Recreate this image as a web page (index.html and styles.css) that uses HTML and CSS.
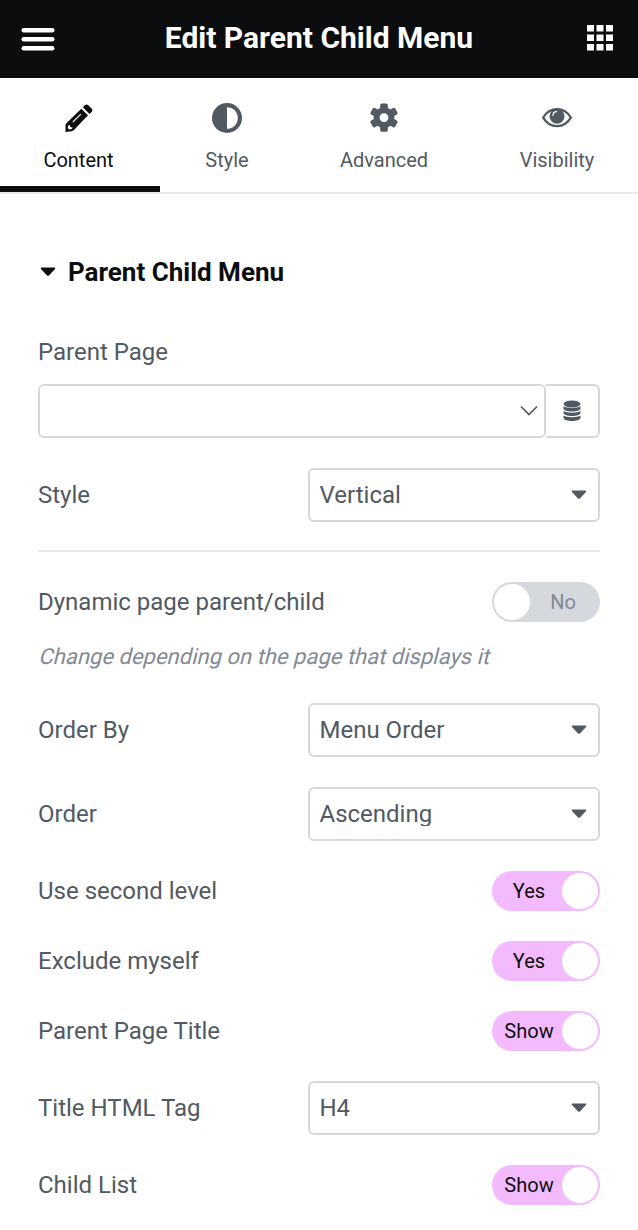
FILE: index.html
```html
<!DOCTYPE html>
<html lang="en">
<head>
<meta charset="utf-8">
<title>Edit Parent Child Menu</title>
<link rel="stylesheet" href="styles.css">
</head>
<body>
<header class="topbar">
  <svg class="burger" width="34" height="24" viewBox="0 0 34 24" fill="#fff"><rect x=".5" y="0" width="33" height="4.600" rx="2.300"/><rect x=".5" y="9" width="33" height="4.600" rx="2.300"/><rect x=".5" y="18" width="33" height="4.600" rx="2.300"/></svg>
  <h1 class="topbar-title">Edit Parent Child Menu</h1>
  <svg class="apps" width="26" height="26" viewBox="0 0 26 26" fill="#fff"><path d="M0 0h7v6.500H0zM9.500 0h7v6.500h-7zM19 0h7v6.500h-7zM0 9.500h7V16H0zM9.500 9.500h7V16h-7zM19 9.500h7V16h-7zM0 19h7v6.500H0zM9.500 19h7v6.500h-7zM19 19h7v6.500h-7z"/></svg>
</header>
<nav class="tabs">
  <a class="tab tab-content active">
    <svg width="30" height="30" viewBox="0 0 30 30"><path fill="currentColor" d="M1.500 29V22.500Q1.500 21.300 2.400 20.300L17.300 5.700 24 12.300 10 27Q9 28 7.800 28.200ZM18.800 4.300l2.100-2.100c1.100-1.100 2.300-1.100 3.400 0l3.300 3.300c1.100 1.100 1.100 2.300 0 3.400l-2.100 2.100Z"/><path fill="none" stroke="#fff" stroke-width="1.100" d="m8.900 19 7.900-7.900"/><path fill="#fff" d="m4.200 22.400 1.500-.7.400 2.300 2.500.4-1 1.700-2.300.4-1.600-1.600Z"/></svg>
    <span>Content</span>
  </a>
  <a class="tab">
    <svg width="30" height="30" viewBox="0 0 30 30"><circle cx="15" cy="15" r="15" fill="currentColor"/><path d="M15 4.200a10.800 10.800 0 0 1 0 21.600z" fill="#fff"/></svg>
    <span>Style</span>
  </a>
  <a class="tab">
    <svg width="30" height="30" viewBox="0 0 30 30"><g fill="currentColor"><circle cx="15" cy="14.600" r="10.400"/><rect x="11.200" y=".4" width="7.600" height="28.400" rx="1.600"/><rect x="11.200" y=".4" width="7.600" height="28.400" rx="1.600" transform="rotate(60 15 14.600)"/><rect x="11.200" y=".4" width="7.600" height="28.400" rx="1.600" transform="rotate(120 15 14.600)"/></g><circle cx="15" cy="14.600" r="4.400" fill="#fff"/></svg>
    <span>Advanced</span>
  </a>
  <a class="tab tab-visibility">
    <svg width="30" height="30" viewBox="0 0 30 30"><path d="M1.200 14.700C4.500 9 9.500 6.200 15 6.200S25.500 9 28.800 14.700c-3.300 5.700-8.300 8.500-13.800 8.500S4.500 20.400 1.200 14.700Z" fill="none" stroke="currentColor" stroke-width="2.300"/><circle cx="15" cy="13.300" r="7.500" fill="currentColor"/><path d="M11 12.400c0-2.100 1.400-3.600 3.700-3.700" fill="none" stroke="#fff" stroke-width="1.200" stroke-linecap="round"/></svg>
    <span>Visibility</span>
  </a>
</nav>
<main class="panel">
  <h2 class="section-title"><svg width="16" height="10" viewBox="0 0 16 10"><path class="caret" d="M1.500.5h13q1.500.2.500 1.500L9.200 8.300q-1.200 1-2.400 0L1 2Q0 .7 1.500.5Z"/></svg>Parent Child Menu</h2>
  <div class="field">
    <label class="label">Parent Page</label>
    <div class="combo">
      <div class="combo-input"><svg width="18" height="12" viewBox="0 0 18 12"><path d="m1 1.500 8 8 8-8" fill="none" stroke="#515962" stroke-width="1.700"/></svg></div>
      <div class="combo-button"><svg width="18" height="22" viewBox="0 0 18 22" fill="#515962"><ellipse cx="9" cy="4" rx="8.500" ry="3.500"/><path d="M.5 6.300c3 2.300 14 2.300 17 0v2.200c0 4-17 4-17 0ZM.5 10.900c3 2.300 14 2.300 17 0v2.200c0 4-17 4-17 0ZM.5 15.500c3 2.300 14 2.300 17 0v2.200c0 4.300-17 4.300-17 0Z"/></svg></div>
    </div>
  </div>
  <div class="row"><span class="label">Style</span><div class="select"><span class="value">Vertical</span><svg width="16" height="10" viewBox="0 0 16 10"><path class="caret" d="M1.500.5h13q1.500.2.500 1.500L9.200 8.300q-1.200 1-2.400 0L1 2Q0 .7 1.500.5Z"/></svg></div></div>
  <hr class="divider">
  <div class="row"><span class="label">Dynamic page parent/child</span><div class="switch off"><i class="knob"></i><span class="state">No</span></div></div>
  <p class="description">Change depending on the page that displays it</p>
  <div class="row"><span class="label">Order By</span><div class="select"><span class="value">Menu Order</span><svg width="16" height="10" viewBox="0 0 16 10"><path class="caret" d="M1.500.5h13q1.500.2.500 1.500L9.200 8.300q-1.200 1-2.400 0L1 2Q0 .7 1.500.5Z"/></svg></div></div>
  <div class="row"><span class="label">Order</span><div class="select"><span class="value">Ascending</span><svg width="16" height="10" viewBox="0 0 16 10"><path class="caret" d="M1.500.5h13q1.500.2.500 1.500L9.200 8.300q-1.200 1-2.400 0L1 2Q0 .7 1.500.5Z"/></svg></div></div>
  <div class="row"><span class="label">Use second level</span><div class="switch"><span class="state">Yes</span><i class="knob"></i></div></div>
  <div class="row"><span class="label">Exclude myself</span><div class="switch"><span class="state">Yes</span><i class="knob"></i></div></div>
  <div class="row"><span class="label">Parent Page Title</span><div class="switch"><span class="state">Show</span><i class="knob"></i></div></div>
  <div class="row"><span class="label">Title HTML Tag</span><div class="select"><span class="value">H4</span><svg width="16" height="10" viewBox="0 0 16 10"><path class="caret" d="M1.500.5h13q1.500.2.500 1.500L9.200 8.300q-1.200 1-2.400 0L1 2Q0 .7 1.500.5Z"/></svg></div></div>
  <div class="row"><span class="label">Child List</span><div class="switch"><span class="state">Show</span><i class="knob"></i></div></div>
</main>
</body>
</html>
```
FILE: styles.css
```css
* { box-sizing: border-box; }
body {
  margin: 0;
  background: #fff;
  color: #515962;
  font-family: Roboto, "Liberation Sans", sans-serif;
  font-size: 24px;
}
svg { display: block; flex: none; }
.topbar {
  display: flex;
  align-items: center;
  justify-content: space-between;
  height: 78px;
  padding: 0 25px 0 21px;
  background: #0c0d0e;
  color: #fff;
}
.burger { margin-top: 2px; }
.apps { margin-top: -2px; }
.topbar-title { margin: 0 4px 2px 0; font-size: 30px; font-weight: 700; line-height: 40px; }
.tabs {
  display: grid;
  grid-template-columns: 160px 134px 180px 164px;
  height: 116px;
  border-bottom: 2px solid #e6e8ea;
}
.tab {
  display: flex;
  flex-direction: column;
  align-items: center;
  gap: 15px;
  padding-top: 25px;
  font-size: 20px;
  line-height: 24px;
}
.tab-content { padding-right: 3px; }
.tab-visibility { padding-left: 2px; }
.active { color: #0c0d0e; border-bottom: 6px solid #0c0d0e; }
.panel {
  display: flex;
  flex-direction: column;
  gap: 30px;
  padding: 62px 38px 0;
}
.section-title {
  display: flex;
  align-items: center;
  gap: 12px;
  margin: 0 0 18px;
  padding-left: 2px;
  color: #0c0d0e;
  font-size: 26px;
  font-weight: 700;
  line-height: 32px;
}
.caret { fill: #515962; }
.section-title .caret { fill: #0c0d0e; }
.field { display: flex; flex-direction: column; gap: 16px; }
.label { line-height: 32px; white-space: nowrap; }
.combo { display: flex; height: 54px; }
.combo-input {
  display: flex;
  align-items: center;
  justify-content: flex-end;
  flex: 1;
  padding-right: 6px;
  border: 2px solid #d6d7dd;
  border-radius: 6px;
}
.combo-button {
  display: flex;
  align-items: center;
  justify-content: center;
  width: 54px;
  padding-right: 1px;
  border: 2px solid #d6d7dd;
  border-left: 0;
  border-radius: 0 6px 6px 0;
}
.row { display: flex; align-items: center; justify-content: space-between; }
.select {
  display: flex;
  align-items: center;
  justify-content: space-between;
  width: 292px;
  height: 54px;
  padding: 0 11px 0 9.5px;
  border: 2px solid #d6d7dd;
  border-radius: 6px;
}
.value { line-height: 32px; clip-path: inset(0 0 4px 0); }
.divider { width: 100%; height: 2px; margin: -2px 0 0; border: 0; background: #e6e8ea; }
.switch {
  display: flex;
  align-items: center;
  width: 108px;
  height: 40px;
  padding: 2px 2px 2px 4px;
  border-radius: 20px;
  background: #f3bafd;
  color: #0c0d0e;
  font-size: 20px;
}
.off { padding: 2px 4px 2px 2px; background: #d5d8dc; color: #818a96; }
.state { flex: 1; text-align: center; }
.knob { width: 36px; height: 36px; border-radius: 50%; background: #fff; }
.description {
  margin: -11px 0 0;
  color: #818a96;
  font-size: 22px;
  line-height: 32px;
  transform: skewX(-14deg);
  transform-origin: 0 75%;
}
```
